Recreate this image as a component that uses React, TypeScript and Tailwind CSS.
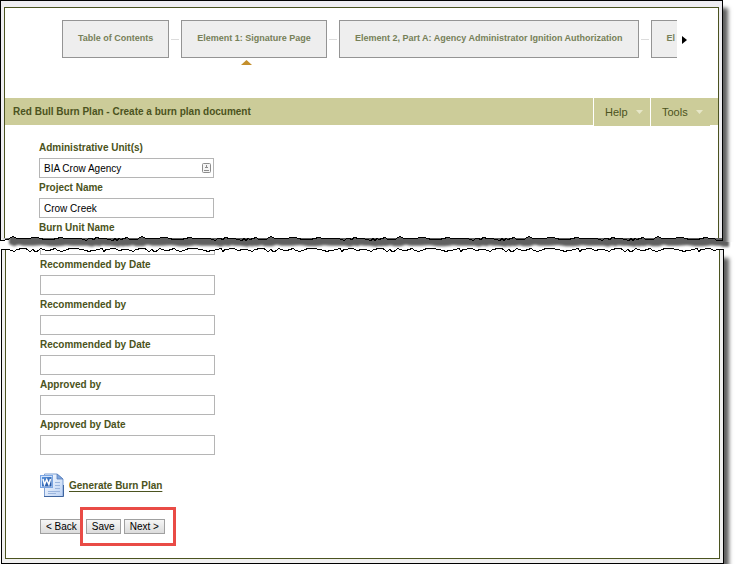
import React from "react";

const tabs = [
  { label: "Table of Contents", active: false },
  { label: "Element 1: Signature Page", active: true },
  { label: "Element 2, Part A: Agency Administrator Ignition Authorization", active: false },
  { label: "El", active: false },
];

const signatureFields = [
  "Recommended by Date",
  "Recommended by",
  "Recommended by Date",
  "Approved by",
  "Approved by Date",
];

// Heights of the torn edges, as [step, height] pairs that are walked from left to right.
const upperTear = [
  [3, 5], [3, 5], [2, 3], [4, 2], [3, 4], [8, 4], [7, 4], [2, 3], [4, 3], [3, 4], [3, 5], [5, 5], [5, 5], [3, 4], [6, 3], [3, 4],
  [12, 4], [5, 4], [3, 6], [2, 4], [3, 4], [2, 5], [5, 3], [4, 4], [8, 4], [2, 6], [2, 4], [2, 6], [2, 4], [6, 5], [3, 3], [4, 5],
];
const lowerTear = [
  [4, 15], [5, 15], [3, 17], [5, 15], [4, 14], [4, 14], [3, 17], [2, 15], [2, 17], [4, 17], [5, 14], [3, 16], [6, 16], [3, 14],
  [4, 16], [5, 17], [3, 15], [7, 14], [9, 14], [3, 16], [3, 17], [2, 16], [8, 16], [2, 14], [2, 17], [9, 15], [4, 14], [5, 16],
];

function tearPoints(steps: number[][], from: number, to: number) {
  const points: string[] = [];
  let x = from;
  let i = 0;
  while (x < to) {
    points.push(`${x},${steps[i % steps.length][1] + 0.5}`);
    x += steps[i % steps.length][0];
    i += 1;
  }
  return points;
}

function Tear() {
  const upper = [...tearPoints(upperTear, 5, 717), "717,6.5", "723,6.5"];
  const lower = [...tearPoints(lowerTear, 5, 718), "718,15.5", "724,15.5"];
  const gap = ["0,6.5", ...upper, "723,8", "739,8", "739,15.5", ...[...lower].reverse(), "0,15.5"].join(" ");
  return (
    <svg
      className="relative z-10 -mt-1 -mb-2 block h-6 w-full"
      viewBox="0 0 739 24"
      preserveAspectRatio="none"
      aria-hidden="true"
    >
      <defs>
        <filter id="soft" x="-2%" y="-60%" width="104%" height="220%">
          <feGaussianBlur stdDeviation="1.2" />
        </filter>
        <clipPath id="gap">
          <polygon points={gap} />
        </clipPath>
      </defs>
      <polygon points={gap} fill="#fff" />
      <g clipPath="url(#gap)">
        <polygon
          points={["9,-4", "9,10", ...upper.slice(1).map((p) => {
            const [x, y] = p.split(",").map(Number);
            return `${Math.min(x + 6, 729)},${y / 2 + 9.5}`;
          }), "729,-4"].join(" ")}
          fill="#606060"
          filter="url(#soft)"
        />
      </g>
      <g fill="none" stroke="#000" shapeRendering="crispEdges">
        <path d="M.5 0V6.500H4.500M722.500 0V7" />
        <polyline points={upper.join(" ")} />
        <polyline points={["1.5,24", "1.5,15.5", ...lower.slice(0, -1), "723.5,15.5", "723.5,24"].join(" ")} />
      </g>
    </svg>
  );
}

function WordIcon() {
  return (
    <svg width="24" height="25" viewBox="0 0 24 25" aria-hidden="true">
      <defs>
        <linearGradient id="page" x1="0" y1="0" x2="1" y2="1">
          <stop offset="0" stopColor="#fff" />
          <stop offset="1" stopColor="#b9d0f3" />
        </linearGradient>
        <linearGradient id="badge" x1="0" y1="0" x2="1" y2="1">
          <stop offset="0" stopColor="#5b95de" />
          <stop offset="1" stopColor="#1a4b9a" />
        </linearGradient>
      </defs>
      <path d="M4.500 1h12.500l6 5v17.500H4.500z" fill="url(#page)" stroke="#7d9fd2" />
      <path d="M4 23.500h19.500V12" fill="none" stroke="#3f659f" />
      <path d="M17 1v5h6z" fill="#7fa6dd" stroke="#5c82bd" strokeWidth=".8" />
      <path d="M15 9.500h5M15 12.500h5M15 15.500h5M8 18.500h12M8 20.500h8" stroke="#9ab5de" />
      <rect x=".5" y="2.500" width="12" height="12" fill="#d4e4fa" stroke="#7ba6e4" />
      <rect x="2" y="4" width="9.500" height="9.500" fill="url(#badge)" />
      <path d="M3 6l1.500 5.500L6.700 6.500l2.200 5L10.500 6" fill="none" stroke="#fff" strokeWidth="1.500" />
    </svg>
  );
}

function Caret() {
  return (
    <svg width="7" height="4" viewBox="0 0 7 4" aria-hidden="true">
      <path d="M0 0h7L3.500 4z" fill="#e6e6c8" />
    </svg>
  );
}

const inputClass = "block h-5 w-[175px] border border-[#b5b5b5] bg-white px-1 text-[10px] text-black outline-none";
const labelClass = "block h-5 text-[10px] leading-5 font-bold text-[#4b5320]";
const buttonClass =
  "h-[15px] border border-[#a0a0a0] bg-linear-to-b from-[#f6f6f6] to-[#dcdcdc] px-[5px] text-[10px] leading-[13px] whitespace-nowrap text-black";

export default function App() {
  return (
    <div className="w-full overflow-hidden bg-white font-['Liberation_Sans',Arial,sans-serif]">
      <section className="mr-4 border border-b-0 border-black bg-[#eeedf1] px-[3px] pt-[6px] shadow-[5px_8px_4px_#606060]">
        <div className="border border-b-0 border-[#4b5320] bg-white">
          <nav className="flex items-start pt-3 pr-[31px] pl-[57px]" aria-label="Burn plan elements">
            <div className="flex h-[78px] min-w-0 flex-1 overflow-hidden">
              {tabs.map((tab, i) => (
                <React.Fragment key={tab.label}>
                  {i > 0 && <span className="mx-[2px] mt-[19px] h-px w-2 shrink-0 bg-[#dcdcdc]" />}
                  <div className="shrink-0">
                    <button className="block h-[38px] border border-[#949494] bg-[#eee] px-[15px] text-[9px] font-bold whitespace-nowrap text-[#768058]">
                      {tab.label}
                    </button>
                    {tab.active && (
                      <svg className="mt-[2px] ml-[60px]" width="11" height="5" viewBox="0 0 11 5" aria-hidden="true">
                        <path d="M0 5L5.500 0L11 5z" fill="#c48f2c" />
                      </svg>
                    )}
                  </div>
                </React.Fragment>
              ))}
            </div>
            <button className="mt-4 ml-[5px]" aria-label="Next elements">
              <svg width="5" height="8" viewBox="0 0 5 8">
                <path d="M0 0L5 4L0 8z" fill="#000" />
              </svg>
            </button>
          </nav>
          <header className="flex h-[27px] items-start bg-[#cccc99] pr-2 pl-2 text-[#4b5320]">
            <h1 className="flex-1 text-[10px] leading-[28px] font-bold whitespace-nowrap">
              Red Bull Burn Plan - Create a burn plan document
            </h1>
            <button className="flex h-7 w-[57px] items-center justify-between border-l border-white bg-[#cccc99] pr-[7px] pl-[11px] text-[11px]">
              Help <Caret />
            </button>
            <button className="flex h-7 w-[60px] items-center justify-between border-l border-white bg-[#cccc99] pr-[7px] pl-[11px] text-[11px]">
              Tools <Caret />
            </button>
          </header>
          <div className="pt-[13px] pl-[34px]">
            <label htmlFor="unit" className={labelClass}>Administrative Unit(s)</label>
            <div className="relative w-[175px]">
              <input id="unit" className={inputClass} defaultValue="BIA Crow Agency" />
              <svg className="absolute top-[5px] right-[3px]" width="9" height="10" viewBox="0 0 9 10" aria-hidden="true">
                <rect x=".5" y=".5" width="8" height="9" rx="1" fill="#f4f4f4" stroke="#8c8c8c" />
                <path d="M4.500 2v3M3 4.500h3M2 7.500h5" stroke="#8c8c8c" />
              </svg>
            </div>
            <label htmlFor="project" className={labelClass}>Project Name</label>
            <input id="project" className={inputClass} defaultValue="Crow Creek" />
            <span className={labelClass}>Burn Unit Name</span>
          </div>
        </div>
      </section>

      <Tear />

      <section className="mr-[15px] ml-px border border-t-0 border-black bg-[#f0f0f0] px-[3px] pb-1 shadow-[5px_8px_4px_#606060]">
        <div className="border border-t-0 border-[#4b5320] bg-white pb-6 pl-[34px]">
          <div className="flex h-[5px] items-end overflow-hidden">
            <input aria-label="Recommended by" className={inputClass} />
          </div>
          {signatureFields.map((name, i) => (
            <div key={i}>
              <label htmlFor={`signature-${i}`} className={labelClass}>{name}</label>
              <input id={`signature-${i}`} className={inputClass} />
            </div>
          ))}
          <div className="mt-[18px] flex items-center gap-[5px]">
            <WordIcon />
            <a href="#generate" className="text-[10px] font-bold text-[#4b5320] underline underline-offset-2">
              Generate Burn Plan
            </a>
          </div>
          <div className="mt-[21px] flex">
            <button className={buttonClass}>&lt; Back</button>
            <div className="relative ml-[3px] flex gap-[3px]">
              <button className={buttonClass}>Save</button>
              <button className={buttonClass}>Next &gt;</button>
              <div className="pointer-events-none absolute -top-3 -right-[11px] -bottom-3 -left-[6px] border-3 border-[#e94b46]" />
            </div>
          </div>
        </div>
      </section>
    </div>
  );
}
